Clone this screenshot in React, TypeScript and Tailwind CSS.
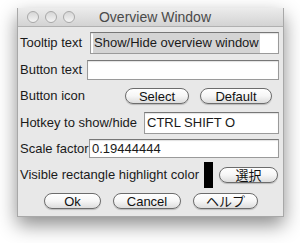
import React from "react";

const font = { fontFamily: '"Liberation Sans", "Noto Sans CJK JP", sans-serif' };

function Field({ children }: { children?: React.ReactNode }) {
  return (
    <div className="flex-1 h-full bg-white border border-[#9a9a9a] border-t-[#777] shadow-[inset_0_1px_1px_rgba(0,0,0,0.12)] flex items-center pl-[2px] overflow-hidden whitespace-nowrap">
      {children}
    </div>
  );
}

function PillButton({ label, w }: { label: string; w: string }) {
  return (
    <div
      className={`${w} h-[16px] rounded-full border border-[#6c6c6c] bg-gradient-to-b from-white via-[#f6f6f6] to-[#dddddd] shadow-[0_1px_1px_rgba(0,0,0,0.2)] flex items-center justify-center text-[13px] text-[#111] leading-none`}
    >
      {label}
    </div>
  );
}

function Light() {
  return (
    <div className="w-[12px] h-[12px] rounded-full border border-[#a8a8a8] bg-gradient-to-b from-[#d6d6d6] to-[#f4f4f4]" />
  );
}

export default function App() {
  return (
    <div className="w-[300px] h-[243px] bg-white overflow-hidden pt-[8px] pl-[17px]" style={font}>
      <div className="w-[267px] h-[209px] bg-[#e8e8e8] border-x border-b border-[#a8a8a8] shadow-[0_8px_18px_rgba(0,0,0,0.45)] flex flex-col text-[13px] text-[#1a1a1a]">
        {/* title bar */}
        <div className="h-[19px] bg-gradient-to-b from-[#ececec] to-[#d3d3d3] border-b border-[#b0b0b0] flex items-center">
          <div className="flex gap-[6px] pl-[9px]">
            <Light />
            <Light />
            <Light />
          </div>
          <div className="flex-1 text-center text-[14px] text-[#4a4a4a] pr-[48px]">Overview Window</div>
        </div>

        <div className="flex flex-col pl-[2px] pr-[4px]">
          <div className="mt-[5px] h-[22px] flex items-center">
            <div className="w-[70px] whitespace-nowrap">Tooltip text</div>
            <Field>
              <span className="bg-[#d4d4d4] px-[1px]">Show/Hide overview window</span>
            </Field>
          </div>

          <div className="mt-[6px] h-[20px] flex items-center">
            <div className="w-[67px] whitespace-nowrap">Button text</div>
            <Field />
          </div>

          <div className="mt-[8px] h-[16px] flex items-center">
            <div className="w-[105px] whitespace-nowrap">Button icon</div>
            <PillButton label="Select" w="w-[64px]" />
            <div className="w-[11px]" />
            <PillButton label="Default" w="w-[72px]" />
          </div>

          <div className="mt-[8px] h-[22px] flex items-center">
            <div className="w-[124px] whitespace-nowrap">Hotkey to show/hide</div>
            <Field>
              <span>CTRL SHIFT O</span>
            </Field>
          </div>

          <div className="mt-[5px] h-[19px] flex items-center">
            <div className="w-[69px] whitespace-nowrap">Scale factor</div>
            <Field>
              <span>0.19444444</span>
            </Field>
          </div>

          <div className="mt-[4px] h-[26px] flex items-center">
            <div className="w-[184px] whitespace-nowrap">Visible rectangle highlight color</div>
            <div className="w-[9px] h-[26px] bg-black" />
            <div className="w-[6px]" />
            <PillButton label="選択" w="w-[59px]" />
          </div>

          <div className="mt-[5px] h-[16px] flex items-center pl-[24px] gap-[12px]">
            <PillButton label="Ok" w="w-[57px]" />
            <PillButton label="Cancel" w="w-[68px]" />
            <PillButton label="ヘルプ" w="w-[65px]" />
          </div>
        </div>
      </div>
    </div>
  );
}
